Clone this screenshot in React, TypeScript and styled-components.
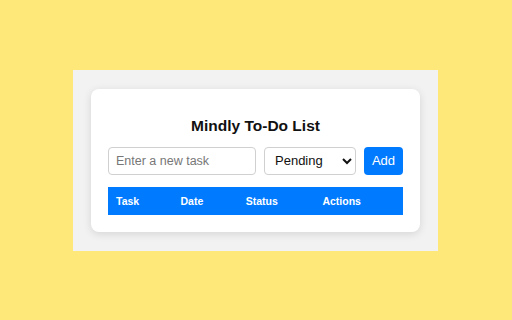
import React, { useState } from 'react';
import styled, { createGlobalStyle } from 'styled-components';

const Global = createGlobalStyle`
  html, body {
    margin: 0;
    height: 100%;
    background: #ffe87a;
    font-family: "Liberation Sans", Arial, sans-serif;
  }
  #root {
    height: 100%;
    display: flex;
    align-items: center;
    justify-content: center;
  }
`;

const Stage = styled.div`
  width: 365px;
  height: 181px;
  box-sizing: border-box;
  background: #f2f2f2;
  padding: 19px 18px;
  margin-right: 1px;
`;

const Card = styled.div`
  background: #fff;
  border-radius: 8px;
  box-shadow: 0 2px 8px rgba(0, 0, 0, 0.12);
  padding: 28px 17px 17px;
  height: 100%;
  box-sizing: border-box;
`;

const Title = styled.h2`
  margin: 0 0 12px;
  text-align: center;
  font-size: 15.5px;
  line-height: 18px;
  font-weight: bold;
  color: #111;
`;

const Row = styled.div`
  display: flex;
  gap: 8px;
  margin-bottom: 12px;
`;

const TaskInput = styled.input`
  width: 148px;
  height: 28px;
  box-sizing: border-box;
  border: 1px solid #d0d0d0;
  border-radius: 4px;
  padding: 0 7px;
  font-family: inherit;
  font-size: 12.5px;
  color: #333;
  &::placeholder {
    color: #777;
  }
`;

const StatusSelect = styled.select`
  width: 92px;
  height: 28px;
  box-sizing: border-box;
  border: 1px solid #d0d0d0;
  border-radius: 4px;
  padding: 0 6px;
  font-family: inherit;
  font-size: 13px;
  color: #111;
  background: #fff;
`;

const AddButton = styled.button`
  width: 40px;
  height: 28px;
  border: none;
  border-radius: 4px;
  background: #007bff;
  color: #fff;
  font-family: inherit;
  font-size: 13px;
  cursor: pointer;
`;

const Table = styled.table`
  width: 100%;
  border-collapse: collapse;
`;

const Th = styled.th<{ $w: number }>`
  width: ${(p) => p.$w}px;
  height: 28px;
  padding: 0 0 0 8px;
  background: #007bff;
  color: #fff;
  text-align: left;
  font-size: 10.5px;
  font-weight: bold;
`;

const App = () => {
  const [task, setTask] = useState('');
  return (
    <>
      <Global />
      <Stage>
        <Card>
          <Title>Mindly To-Do List</Title>
          <Row>
            <TaskInput
              placeholder="Enter a new task"
              value={task}
              onChange={(e) => setTask(e.target.value)}
            />
            <StatusSelect defaultValue="Pending">
              <option>Pending</option>
              <option>Completed</option>
            </StatusSelect>
            <AddButton>Add</AddButton>
          </Row>
          <Table>
            <thead>
              <tr>
                <Th $w={64}>Task</Th>
                <Th $w={65}>Date</Th>
                <Th $w={77}>Status</Th>
                <Th $w={90}>Actions</Th>
              </tr>
            </thead>
          </Table>
        </Card>
      </Stage>
    </>
  );
};

export default App;
